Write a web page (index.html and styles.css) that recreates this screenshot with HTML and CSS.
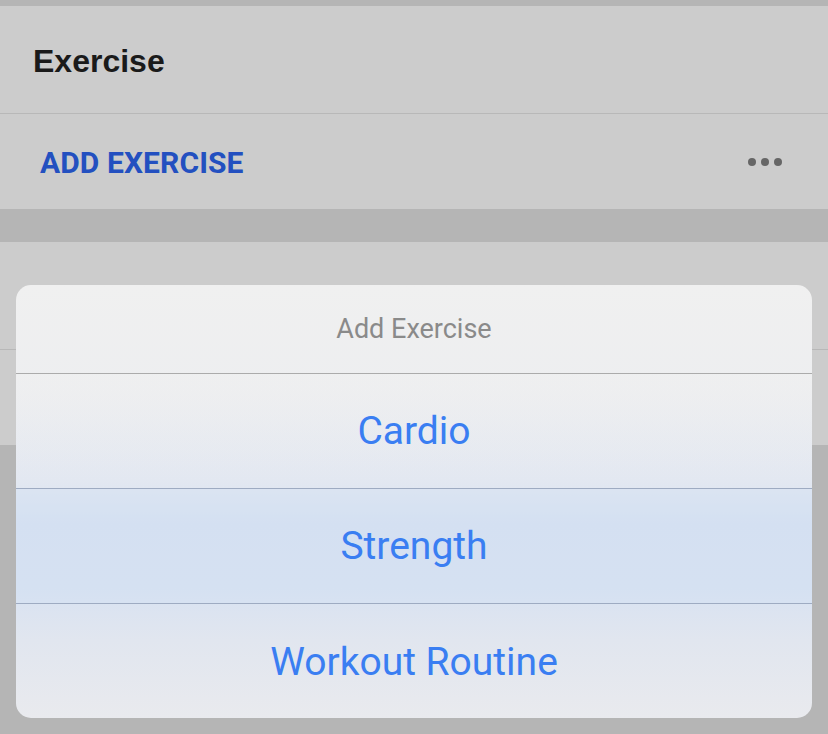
FILE: index.html
```html
<!DOCTYPE html>
<html>
<head>
<meta charset="utf-8">
<link rel="stylesheet" href="styles.css">
</head>
<body>
<div class="page">
  <div class="top-strip"></div>
  <section class="group">
    <div class="group-title">Exercise</div>
    <div class="row action-row">
      <span class="action">ADD EXERCISE</span>
      <span class="dots"><i></i><i></i><i></i></span>
    </div>
  </section>
  <div class="gap"></div>
  <section class="group">
    <div class="row first-row"><span class="label">Food</span></div>
    <div class="row second-row"></div>
  </section>
  <div class="rest"></div>

  <div class="sheet">
    <div class="sheet-title">Add Exercise</div>
    <div class="option opt-cardio">Cardio</div>
    <div class="option opt-strength">Strength</div>
    <div class="option opt-routine">Workout Routine</div>
  </div>
</div>
</body>
</html>
```

FILE: styles.css
```css
* { box-sizing: border-box; }
html, body { margin: 0; padding: 0; }
body {
  width: 828px;
  height: 734px;
  overflow: hidden;
  background: #b5b5b5;
  font-family: Roboto, "Liberation Sans", sans-serif;
}
.page {
  position: relative;
  width: 828px;
  height: 734px;
}
.top-strip { height: 6px; background: #b5b5b5; }
.group { background: #cccccc; }
.group-title {
  height: 108px;
  padding: 4px 0 0 33px;
  display: flex;
  align-items: center;
  border-bottom: 1px solid #b8b8b8;
  font-family: "Liberation Sans", Arial, sans-serif;
  font-weight: 700;
  font-size: 32px;
  color: #1a1a1a;
}
.row {
  display: flex;
  align-items: center;
}
.action-row {
  height: 95px;
  padding: 0 46px 0 40px;
  justify-content: space-between;
}
.action {
  font-family: Roboto, sans-serif;
  font-weight: 700;
  font-size: 30px;
  color: #2350c0;
  letter-spacing: 0.1px;
  padding-top: 2px;
}
.dots { display: flex; gap: 5px; }
.dots i {
  display: block;
  width: 8px;
  height: 8px;
  border-radius: 50%;
  background: #666666;
}
.gap { height: 33px; background: #b5b5b5; }
.first-row {
  height: 108px;
  border-bottom: 1px solid #b8b8b8;
  padding: 0 32px;
  align-items: flex-start;
  padding-top: 39px;
}
.label { font-size: 20px; color: #1a1a1a; }
.second-row { height: 95px; }
.rest { height: 289px; background: #b5b5b5; }

.sheet {
  position: absolute;
  left: 16px;
  top: 285px;
  width: 796px;
  height: 433px;
  border-radius: 15px;
  overflow: hidden;
  background: linear-gradient(180deg, #f0f0f0 0%, #edeef0 25%, #e3e8f1 45%, #d6e1f2 55%, #d8e2f2 70%, #e1e6ef 82%, #e9eaee 100%);
  display: flex;
  flex-direction: column;
}
.sheet-title {
  height: 89px;
  border-bottom: 1px solid #ababab;
  display: flex;
  align-items: center;
  justify-content: center;
  font-size: 27px;
  color: #8a8a8a;
  padding-bottom: 1px;
}
.option {
  height: 115px;
  display: flex;
  align-items: center;
  justify-content: center;
  font-size: 39px;
  color: #3a7ef2;
  border-bottom: 1px solid #9eabc2;
  padding-bottom: 1px;
}
.opt-cardio { background: linear-gradient(180deg, rgba(240,240,240,0.4), rgba(225,231,242,0.2)); }
.opt-strength { background: rgba(210,224,243,0.35); }
.opt-routine {
  border-bottom: none;
  height: 114px;
  padding-top: 2px;
}
```
